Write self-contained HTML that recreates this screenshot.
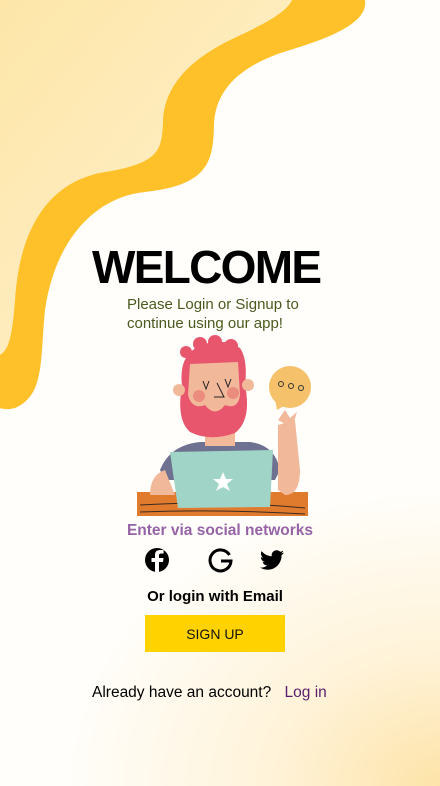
<!DOCTYPE html>
<html><head><meta charset="utf-8"><style>
html,body{margin:0;padding:0}
body{width:440px;height:786px;position:relative;overflow:hidden;font-family:"Liberation Sans",sans-serif;
background:radial-gradient(ellipse 380px 300px at 440px 786px,#fde3a8 0%,#fff3d9 45%,#fffefb 100%);}
.abs{position:absolute}
h1{position:absolute;left:92px;top:240px;margin:0;font-size:46px;font-weight:bold;letter-spacing:-1.7px;color:#000;white-space:nowrap}
.sub{left:127px;top:295px;font-size:15px;line-height:19px;color:#4a5a1e}
.social{left:0;width:440px;top:522px;text-align:center;font-size:15.5px;font-weight:bold;color:#9563a6}
.orl{left:0;width:430px;top:588px;text-align:center;font-size:15px;font-weight:bold;color:#000}
.btn{left:145px;top:615px;width:140px;height:37px;background:#ffd200;text-align:center;line-height:38px;font-size:14px;color:#111}
.acc{left:92px;top:684px;font-size:15.5px;color:#000}
.acc span{color:#5a1f6e;margin-left:9px}
</style></head><body>
<svg class="abs" style="left:0;top:0" width="440" height="786" viewBox="0 0 440 786">
<defs><linearGradient id="pg" x1="0" y1="0" x2="1" y2="1"><stop offset="0" stop-color="#fde6a8"/><stop offset="1" stop-color="#fff2d2"/></linearGradient></defs>
<path d="M0 0 L292 0 C285 15 255 28 230 40 C190 60 165 85 163 120 C162 150 160 163 105 172 C55 180 20 220 15 300 C12 340 8 350 0 355 Z" fill="url(#pg)"/>
<path d="M292 0 L365 0 C368 20 340 35 290 50 C240 65 215 90 214 125 C213 160 210 185 145 192 C95 197 55 240 45 310 C40 360 45 395 15 408 C8 410 2 409 0 408 L0 355 C8 350 12 340 15 300 C20 220 55 180 105 172 C160 163 162 150 163 120 C165 85 190 60 230 40 C255 28 285 15 292 0 Z" fill="#fec12a"/>
<rect x="137" y="492" width="171" height="24" fill="#e07b2e"/>
<path d="M140 505 Q220 500 305 508 M140 512 Q220 509 305 514" stroke="#3a2a20" stroke-width="1" fill="none"/>
<path d="M160 470 Q170 445 200 442 L250 442 Q275 445 280 470 L275 480 L165 480 Z" fill="#6e7190"/>
<path d="M150 495 Q150 475 165 470 L175 495 Z" fill="#f2b89a"/>
<path d="M278 425 L295 420 L300 470 Q300 495 285 495 L278 490 Z" fill="#f2b89a"/>
<path d="M278 420 L285 410 L290 418 L297 412 L292 428 Z" fill="#f2b89a"/>
<polygon points="170,452 273,450 270,507 178,508" fill="#9fd4c6"/>
<polygon points="223,472 226,479 233,479 227,484 230,491 223,487 216,491 219,484 213,479 220,479" fill="#fff"/>
<rect x="205" y="428" width="30" height="18" fill="#f2b89a"/>
<path d="M182 385 Q178 352 205 344 Q225 338 240 348 Q248 360 245 385 Q252 420 235 433 Q210 442 190 432 Q176 420 182 385 Z" fill="#e8566e"/>
<circle cx="186" cy="352" r="6" fill="#e8566e"/><circle cx="200" cy="344" r="7" fill="#e8566e"/><circle cx="215" cy="342" r="7" fill="#e8566e"/><circle cx="231" cy="346" r="7" fill="#e8566e"/>
<path d="M190 364 L238 362 L240 395 Q238 410 225 405 Q215 418 205 405 Q192 410 188 395 Z" fill="#f2b89a"/>
<circle cx="179" cy="390" r="6" fill="#f2b89a"/><circle cx="248" cy="385" r="6" fill="#f2b89a"/>
<circle cx="199" cy="396" r="6" fill="#ea8c7e"/><circle cx="233" cy="393" r="6" fill="#ea8c7e"/>
<path d="M203 381 L206 389 L209 381 M225 379 L228 387 L231 379 M217 383 L224 397 L214 397" stroke="#222" stroke-width="1" fill="none"/>
<circle cx="290" cy="387" r="21" fill="#f5c26b"/>
<polygon points="275,398 277,410 287,404" fill="#f5c26b"/>
<circle cx="281" cy="384" r="2.5" fill="none" stroke="#333"/><circle cx="291" cy="386" r="2.5" fill="none" stroke="#333"/><circle cx="301" cy="388" r="2.5" fill="none" stroke="#333"/>
<circle cx="157" cy="560" r="12" fill="#000"/>
<path d="M159 572 L159 562 L163 562 L163.5 558 L159 558 L159 555.5 Q159 553.5 161 553.5 L163.6 553.5 L163.6 550 L160 550 Q155 550 155 555 L155 558 L151.5 558 L151.5 562 L155 562 L155 572 Z" fill="#fff"/>
<path d="M229.5 555 A10.5 10.5 0 1 0 231 561 L221 561" fill="none" stroke="#000" stroke-width="3"/>
<g transform="translate(260,548)"><path d="M23.954 4.569c-.885.389-1.83.654-2.825.775 1.014-.611 1.794-1.574 2.163-2.723-.951.555-2.005.959-3.127 1.184-.896-.959-2.173-1.559-3.591-1.559-2.717 0-4.920 2.203-4.920 4.917 0 .39.045.765.127 1.124C7.691 8.094 4.066 6.13 1.64 3.161c-.427.722-.666 1.561-.666 2.475 0 1.71.87 3.213 2.188 4.096-.807-.026-1.566-.248-2.228-.616v.061c0 2.385 1.693 4.374 3.946 4.827-.413.111-.849.171-1.296.171-.314 0-.615-.03-.916-.086.631 1.953 2.445 3.377 4.604 3.417-1.68 1.319-3.809 2.087-6.102 2.087-.39 0-.779-.023-1.17-.067 2.189 1.394 4.768 2.209 7.557 2.209 9.054 0 13.999-7.496 13.999-13.986 0-.209 0-.42-.015-.63.961-.689 1.8-1.6 2.46-2.548z" fill="#000"/></g>
</svg>
<h1>WELCOME</h1>
<div class="abs sub">Please Login or Signup to<br>continue using our app!</div>
<div class="abs social">Enter via social networks</div>
<div class="abs orl">Or login with Email</div>
<div class="abs btn">SIGN UP</div>
<div class="abs acc">Already have an account? <span>Log in</span></div>
</body></html>
